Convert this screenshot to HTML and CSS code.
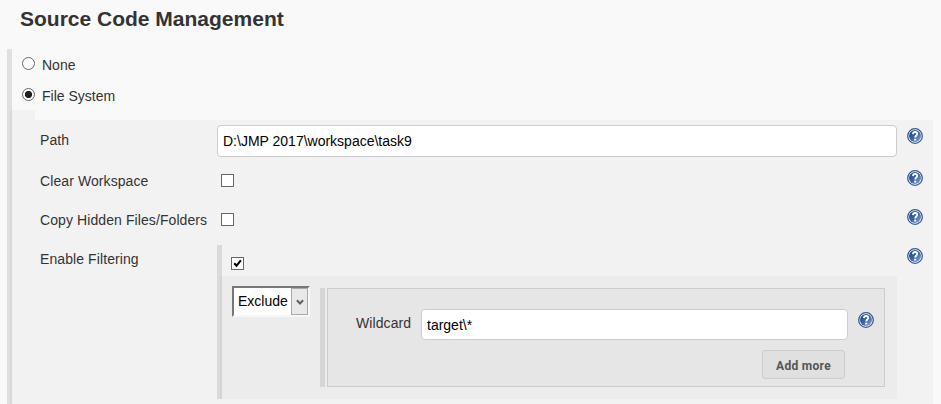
FILE: index.html
```html
<!DOCTYPE html>
<html lang="en">
<head>
<meta charset="utf-8">
<title>Source Code Management</title>
<link rel="stylesheet" href="styles.css">
</head>
<body>
<svg class="defs" width="0" height="0" aria-hidden="true">
  <defs>
    <linearGradient id="blue" x1="0" y1="0" x2="1" y2="1">
      <stop offset="0" stop-color="#1b4485"/>
      <stop offset=".5" stop-color="#3d65a3"/>
      <stop offset="1" stop-color="#94add3"/>
    </linearGradient>
    <symbol id="help" viewBox="0 0 16 16">
      <circle cx="8" cy="8" r="7.3" fill="#fff" stroke="#34598f" stroke-width="1.3"/>
      <circle cx="8" cy="8" r="6" fill="url(#blue)"/>
      <path d="M5.9 6.1C6 4.6 6.8 4 8.1 4c1.3 0 2.1.7 2.1 1.8 0 1.7-2 1.7-2 3.8" fill="none" stroke="#fff" stroke-width="1.8"/>
      <path d="M7.2 10.7h2v1.8h-2z" fill="#fff"/>
    </symbol>
  </defs>
</svg>
<h1>Source Code Management</h1>
<main class="scm">
  <label class="choice"><span class="radio"></span><span>None</span></label>
  <label class="choice"><span class="radio checked"></span><span>File System</span></label>
  <div class="panel">
    <div class="gutter"></div>
    <div class="fields">
      <div class="row path">
        <span class="label">Path</span>
        <div class="input">D:\JMP 2017\workspace\task9</div>
        <svg class="help"><use href="#help"/></svg>
      </div>
      <div class="row">
        <span class="label">Clear Workspace</span>
        <span class="checkbox"></span>
        <svg class="help"><use href="#help"/></svg>
      </div>
      <div class="row">
        <span class="label">Copy Hidden Files/Folders</span>
        <span class="checkbox"></span>
        <svg class="help"><use href="#help"/></svg>
      </div>
      <div class="row filtering">
        <span class="label">Enable Filtering</span>
        <div class="group">
          <span class="checkbox"><svg viewBox="0 0 11 11"><path d="M2.2 5.2l2.3 2.5 4.4-5.3" fill="none" stroke="#000" stroke-width="2.1"/></svg></span>
          <div class="filter">
            <div class="select"><span>Exclude</span><span class="arrow"><svg viewBox="0 0 8 7"><path d="M.9 1.3L4 4.5l3.1-3.2" fill="none" stroke="#606060" stroke-width="2"/></svg></span></div>
            <div class="handle"></div>
            <div class="card">
              <div class="wildcard">
                <span class="label">Wildcard</span>
                <div class="input">target\*</div>
                <svg class="help"><use href="#help"/></svg>
              </div>
              <button class="add" type="button">Add more</button>
            </div>
          </div>
        </div>
        <svg class="help"><use href="#help"/></svg>
      </div>
    </div>
  </div>
</main>
</body>
</html>
```
FILE: styles.css
```css
* { box-sizing: border-box; }
body {
  margin: 0;
  height: 404px;
  overflow: hidden;
  background: #f9f9f9;
  color: #333;
  font: 14px/20px "Liberation Sans", Arial, sans-serif;
}
.defs { position: absolute; }
h1 {
  margin: 0;
  padding: 7px 0 0 20px;
  height: 49px;
  font-size: 21px;
  line-height: 24px;
}
.scm {
  margin: 0 8px 0 7px;
  height: 355px;
  border-left: 5px solid #e0e0e0;
}
.choice {
  display: flex;
  gap: 7px;
  height: 31px;
  padding: 6px 0 0 10px;
}
.radio {
  width: 13px;
  height: 13px;
  margin-top: 2px;
  border: 1px solid #666;
  border-radius: 50%;
  background: #fff;
}
.radio.checked { background: radial-gradient(circle, #222 3.3px, #fff 4px); }
.panel {
  display: flex;
  height: 294px;
  margin: -1px 0 0 -2px;
}
.gutter { width: 25px; background: rgba(0, 0, 0, .027); }
.fields {
  flex: 1;
  margin-top: 10px;
  background: rgba(0, 0, 0, .027);
}
.row {
  display: grid;
  grid-template-columns: 172px 680px 21px;
  column-gap: 5px;
  height: 39px;
  padding-left: 5px;
}
.row > .input, .row > .group { margin-top: 5px; }
.row > .help { margin: 8px 0 0 5px; }
.row > .label { margin-top: 9px; white-space: nowrap; letter-spacing: .09px; }
.row > .checkbox { margin: 12px 0 0 4px; }
.row.path { height: 42px; }
.row.path > .label { margin-top: 10px; }
.help { width: 16px; height: 16px; }
.input {
  height: 32px;
  padding: 5px;
  border: 1px solid #ccc;
  border-radius: 4px;
  background: #fff;
  color: #000;
}
.checkbox {
  display: block;
  width: 13px;
  height: 13px;
  border: 1px solid #666;
  background: #fff;
}
.checkbox svg { display: block; width: 11px; height: 11px; }
.row.filtering { height: auto; }
.group {
  height: 154px;
  border-left: 5px solid #dadada;
}
.group > .checkbox { margin: 12px 0 0 9px; }
.filter {
  display: flex;
  height: 123px;
  margin: 6px 0 0 -2px;
  padding: 10px 12px 0;
  background: rgba(0, 0, 0, .025);
}
.select {
  display: flex;
  justify-content: space-between;
  width: 78px;
  height: 31px;
  padding-left: 4px;
  border: 2px solid;
  border-color: #777 #f7f7f7 #f7f7f7 #777;
  background: #fff;
  color: #000;
  line-height: 26px;
}
.arrow {
  display: flex;
  align-items: center;
  justify-content: center;
  width: 17px;
  border: 1px solid #aaa;
  background: #e9e9e9;
}
.arrow svg { width: 8px; height: 7px; margin-top: 1px; }
.handle { width: 5px; height: 99px; margin: 2px 2px 0 10px; background: #d5d5d5; }
.card {
  flex: 1;
  height: 99px;
  margin-top: 2px;
  padding: 20px 10px 0 28px;
  border: 1px solid #ccc;
  background: #e6e6e6;
}
.wildcard { display: grid; grid-template-columns: 65px 427px 16px; }
.wildcard .label { margin-top: 4px; letter-spacing: .09px; }
.wildcard .input { height: 31px; }
.wildcard .help { margin: 3px 0 0 10px; }
.add {
  display: block;
  width: 83px;
  height: 29px;
  margin: 10px 0 0 406px;
  padding: 3px 0 0;
  border: 1px solid #ccc;
  border-radius: 3px;
  background: #e0e0e0;
  color: #555;
  font: bold 12px/24px Roboto, sans-serif;
  letter-spacing: .3px;
}
```
